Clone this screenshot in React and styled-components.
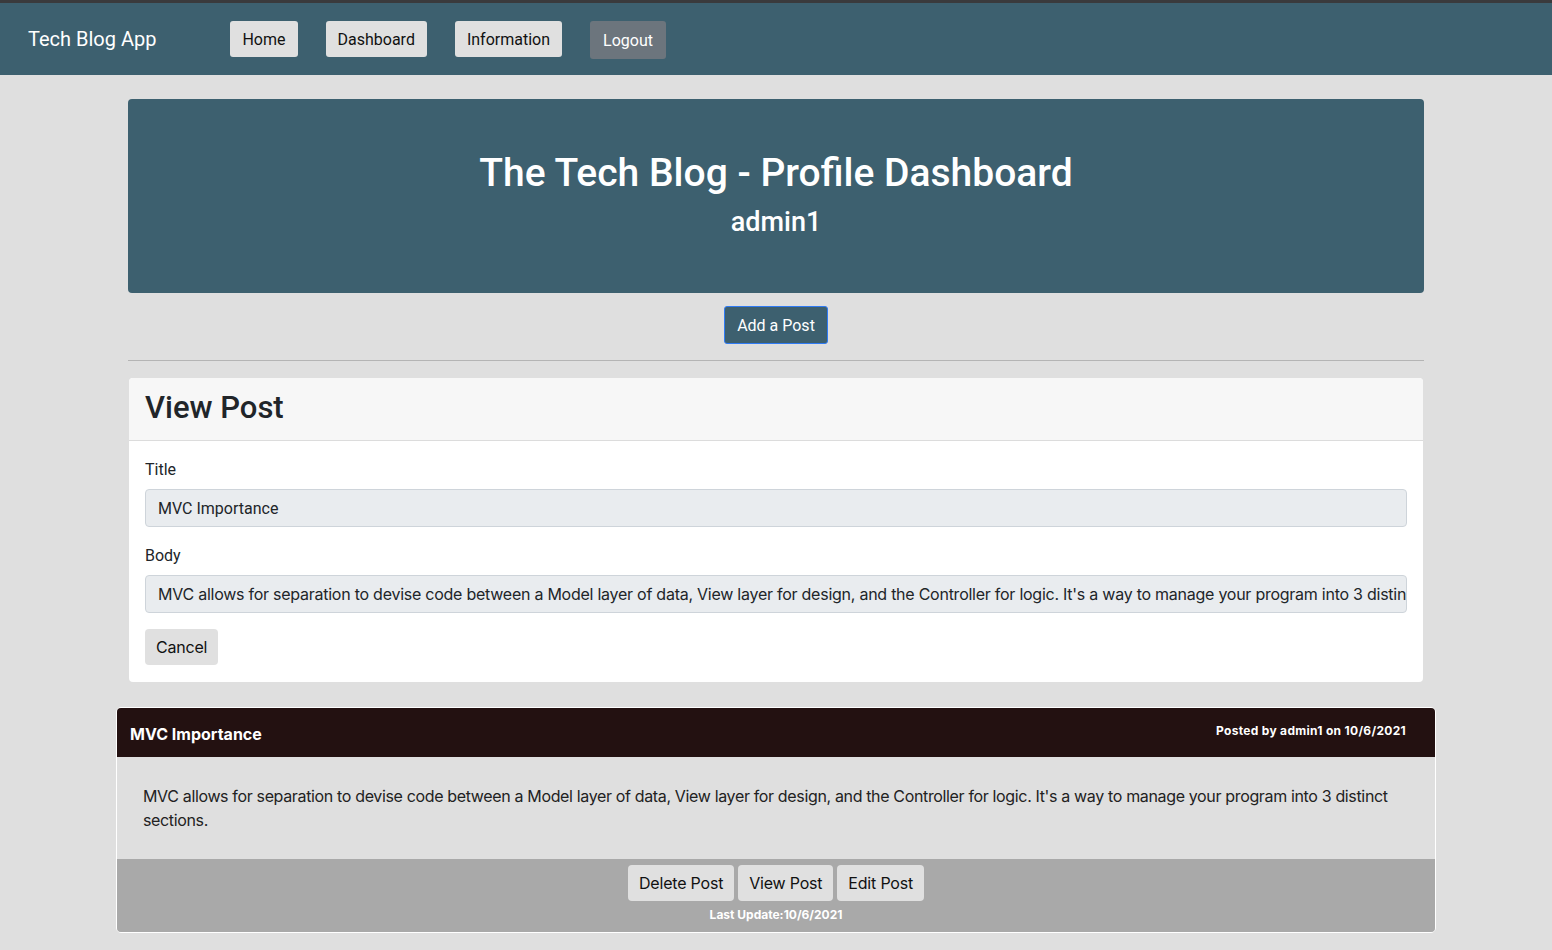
import React from 'react'
import styled, { createGlobalStyle } from 'styled-components'

const GlobalStyle = createGlobalStyle`
  * { box-sizing: border-box; }
  body {
    margin: 0;
    background: #dfdfdf;
    font-family: Inter, "Noto Sans", sans-serif;
    color: #212529;
    border-top: 3px solid #3a3a3c;
  }
`

const Nav = styled.nav`
  display: flex;
  align-items: center;
  height: 72px;
  padding: 0 28px;
  background: #3d606f;
  font-family: Roboto, sans-serif;
`

const Brand = styled.div`
  color: #fff;
  font-size: 20px;
  margin-right: 74px;
`

const NavLinks = styled.div`
  display: flex;
  align-items: center;
  gap: 28px;
`

const NavButton = styled.button`
  font-family: Roboto, sans-serif;
  font-size: 16px;
  height: ${p => (p.$dark ? '38px' : '36px')};
  margin-top: ${p => (p.$dark ? '2px' : '0')};
  padding: 0 ${p => (p.$dark ? '13px' : '12px')};
  border: none;
  border-radius: 3px;
  background: ${p => (p.$dark ? '#6c757d' : '#e0e0e0')};
  color: ${p => (p.$dark ? '#fff' : '#111')};
`

const Main = styled.main`
  max-width: 1320px;
  margin: 0 auto;
  padding-top: 24px;
`

const Inner = styled.div`
  padding: 0 12px;
`

const Hero = styled.header`
  background: #3d606f;
  border-radius: 4px;
  height: 194px;
  display: flex;
  flex-direction: column;
  align-items: center;
  padding-top: 49px;
  color: #fff;
  font-family: Roboto, sans-serif;
`

const HeroTitle = styled.h1`
  margin: 0;
  font-size: 39px;
  font-weight: 500;
  line-height: 50px;
`

const HeroUser = styled.h2`
  margin: 0;
  font-size: 27px;
  font-weight: 500;
  line-height: 48px;
`

const Center = styled.div`
  display: flex;
  justify-content: center;
  padding-top: 13px;
`

const PrimaryButton = styled.button`
  font-family: Roboto, sans-serif;
  font-size: 16px;
  height: 38px;
  padding: 0 12px;
  background: #3d606f;
  color: #fff;
  border: 1px solid #2f7bf5;
  border-radius: 3px;
`

const Rule = styled.hr`
  margin: 16px 0 17px;
  border: none;
  border-top: 1px solid #b4b4b4;
`

const Card = styled.section`
  margin: 0 1px;
  background: #fff;
  border-radius: 4px;
  overflow: hidden;
`

const CardHeader = styled.div`
  background: #f7f7f7;
  border-bottom: 1px solid #dcdcdc;
  height: 63px;
  display: flex;
  align-items: center;
  padding: 0 16px 4px;
`

const CardTitle = styled.h2`
  margin: 0;
  font-family: Roboto, sans-serif;
  font-size: 31px;
  font-weight: 500;
`

const CardBody = styled.form`
  display: flex;
  flex-direction: column;
  align-items: flex-start;
  padding: 17px 16px 17px;
`

const Label = styled.label`
  display: block;
  font-family: Roboto, sans-serif;
  font-size: 16px;
  line-height: 24px;
  margin-bottom: 7px;
`

const Field = styled.div`
  align-self: stretch;
  height: 38px;
  display: flex;
  align-items: center;
  padding: 0 12px;
  background: #e9ecef;
  border: 1px solid #ced4da;
  border-radius: 4px;
  font-size: 16px;
  font-family: ${p => (p.$narrow ? 'Roboto, sans-serif' : 'Inter, sans-serif')};
  letter-spacing: ${p => (p.$narrow ? '0' : '-0.25px')};
  white-space: nowrap;
  overflow: hidden;
  margin-bottom: ${p => (p.$last ? '16px' : '17px')};
`

const GreyButton = styled.button`
  font-family: Inter, sans-serif;
  font-size: 16px;
  letter-spacing: -0.2px;
  height: 36px;
  padding: 0 11px;
  background: #e0e0e0;
  color: #111;
  border: none;
  border-radius: 4px;
`

const Post = styled.article`
  margin-top: 25px;
  border: 1px solid #fff;
  border-radius: 5px;
  overflow: hidden;
  margin-bottom: 18px;
`

const PostHeader = styled.div`
  background: #231111;
  color: #fff;
  height: 49px;
  display: flex;
  justify-content: space-between;
  padding: 0 29px 0 13px;
  font-weight: 700;
`

const PostTitle = styled.h3`
  margin: 0;
  font-size: 16px;
  align-self: center;
  font-weight: 700;
  padding-top: 2px;
`

const PostMeta = styled.span`
  font-size: 12px;
  letter-spacing: 0.3px;
  padding-top: 15px;
`

const PostBody = styled.p`
  margin: 0;
  padding: 27px 26px 27px;
  font-size: 16px;
  letter-spacing: -0.35px;
  line-height: 24px;
  color: #222;
`

const PostFooter = styled.div`
  background: #a9a9a9;
  display: flex;
  flex-direction: column;
  align-items: center;
  padding: 6px 0 10px;
`

const ButtonRow = styled.div`
  display: flex;
  gap: 4px;
`

const Updated = styled.span`
  color: #fff;
  font-size: 12px;
  font-weight: 700;
  margin-top: 6px;
`

const bodyText =
  "MVC allows for separation to devise code between a Model layer of data, View layer for design, and the Controller for logic. It's a way to manage your program into 3 distinct sections."

export default function App() {
  return (
    <>
      <GlobalStyle />
      <Nav>
        <Brand>Tech Blog App</Brand>
        <NavLinks>
          <NavButton>Home</NavButton>
          <NavButton>Dashboard</NavButton>
          <NavButton>Information</NavButton>
          <NavButton $dark>Logout</NavButton>
        </NavLinks>
      </Nav>
      <Main>
        <Inner>
          <Hero>
            <HeroTitle>The Tech Blog - Profile Dashboard</HeroTitle>
            <HeroUser>admin1</HeroUser>
          </Hero>
          <Center>
            <PrimaryButton>Add a Post</PrimaryButton>
          </Center>
          <Rule />
          <Card>
            <CardHeader>
              <CardTitle>View Post</CardTitle>
            </CardHeader>
            <CardBody onSubmit={e => e.preventDefault()}>
              <Label>Title</Label>
              <Field $narrow>MVC Importance</Field>
              <Label>Body</Label>
              <Field $last>{bodyText}</Field>
              <GreyButton type="button">Cancel</GreyButton>
            </CardBody>
          </Card>
        </Inner>
        <Post>
          <PostHeader>
            <PostTitle>MVC Importance</PostTitle>
            <PostMeta>Posted by admin1 on 10/6/2021</PostMeta>
          </PostHeader>
          <PostBody>{bodyText}</PostBody>
          <PostFooter>
            <ButtonRow>
              <GreyButton>Delete Post</GreyButton>
              <GreyButton>View Post</GreyButton>
              <GreyButton>Edit Post</GreyButton>
            </ButtonRow>
            <Updated>Last Update:10/6/2021</Updated>
          </PostFooter>
        </Post>
      </Main>
    </>
  )
}
